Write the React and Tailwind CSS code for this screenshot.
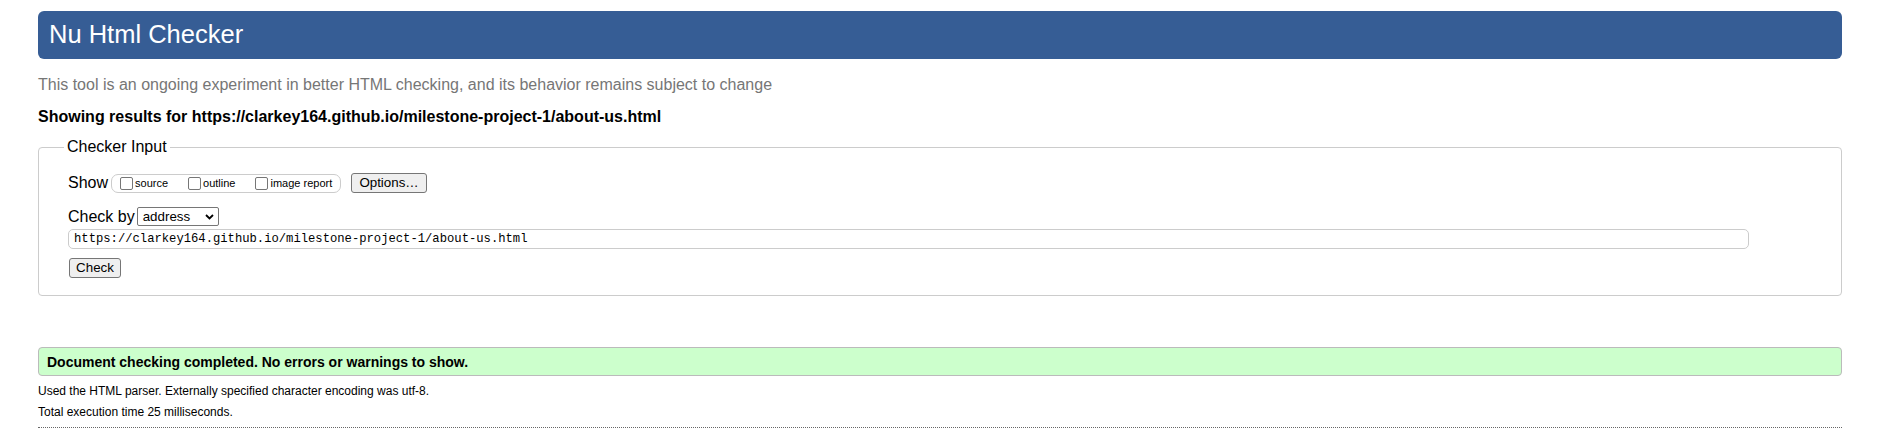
import React from 'react';

const Box = () => (
  <span className="inline-block w-[13px] h-[13px] shrink-0 rounded-[2px] border border-[#767676] bg-white" />
);

function ShowOption({ label, last }) {
  return (
    <span className={`flex items-center ${last ? '' : 'mr-[20px]'}`}>
      <Box />
      <span className="ml-[2px] text-[11px] leading-[13px]">{label}</span>
    </span>
  );
}

export default function App() {
  const url = 'https://clarkey164.github.io/milestone-project-1/about-us.html';

  return (
    <div className="min-h-[447px] bg-white pl-[38px] pr-[40px] pt-[11px] font-['Liberation_Sans',Arial,sans-serif] text-black">
      <header className="flex h-[48px] items-center rounded-[6px] bg-[#365d95] px-[11px]">
        <h1 className="text-[25.5px] leading-none text-white">Nu Html Checker</h1>
      </header>

      <p className="mt-[17px] text-[16px] leading-[18px] text-[#767676]">
        This tool is an ongoing experiment in better HTML checking, and its behavior remains subject to change
      </p>
      <p className="mt-[14px] text-[16px] font-bold leading-[18px]">Showing results for {url}</p>

      <fieldset className="mt-[12px] rounded-[4px] border border-[#cccccc] pb-[17px] pl-[29px] pr-[29px] pt-[17px]">
        <legend className="-ml-[4px] px-[3px] text-[16px] leading-[18px]">Checker Input</legend>

        {/* show options */}
        <div className="flex h-[20px] items-center">
          <span className="text-[16px] leading-[18px]">Show</span>
          <span className="ml-[3px] flex h-[19px] w-[230px] items-center rounded-[7px] border border-[#cccccc] pl-[8px]">
            <ShowOption label="source" />
            <ShowOption label="outline" />
            <ShowOption label="image report" last />
          </span>
          <button className="ml-[10px] h-[20px] w-[76px] rounded-[3px] border border-[#767676] bg-[#efefef] text-[13.33px] leading-none">
            Options…
          </button>
        </div>

        {/* check by */}
        <div className="mt-[14px] flex h-[19px] items-center">
          <span className="text-[16px] leading-[18px]">Check by</span>
          <span className="ml-[2px] flex h-[19px] w-[82px] items-center justify-between rounded-[2px] border border-[#767676] bg-white pl-[5px] pr-[4px] text-[13.33px] leading-none">
            address
            <svg width="9" height="6" viewBox="0 0 9 6" fill="none">
              <path d="M1 1l3.5 3.5L8 1" stroke="#000" strokeWidth="1.8" />
            </svg>
          </span>
        </div>

        <div className="mt-[3px] flex h-[20px] w-[1681px] items-center rounded-[5px] border border-[#cccccc] pl-[5px] font-['Liberation_Mono',monospace] text-[12.2px] leading-none">
          {url}
        </div>

        <button className="ml-[1px] mt-[9px] block h-[20px] w-[52px] rounded-[3px] border border-[#767676] bg-[#efefef] text-[13.33px] leading-none">
          Check
        </button>
      </fieldset>

      <div className="mt-[51px] flex h-[29px] items-center rounded-[4px] border border-[#bbbbbb] bg-[#ccffcc] px-[8px]">
        <p className="text-[14px] font-bold leading-[16px]">Document checking completed. No errors or warnings to show.</p>
      </div>

      <p className="mt-[8px] text-[12px] leading-[14px]">
        Used the HTML parser. Externally specified character encoding was utf-8.
      </p>
      <p className="mt-[7px] text-[12px] leading-[14px]">Total execution time 25 milliseconds.</p>

      <div className="mt-[8px] border-t border-dotted border-[#666666]" />
    </div>
  );
}
